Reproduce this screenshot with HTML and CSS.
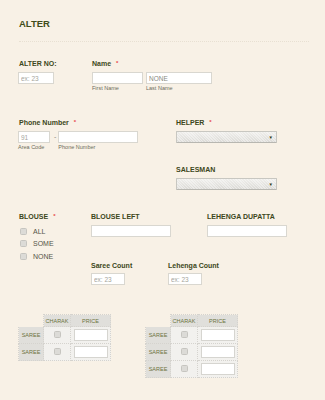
FILE: index.html
```html
<!DOCTYPE html>
<html lang="en">
<head>
  <meta charset="UTF-8">
  <meta name="viewport" content="width=device-width, initial-scale=1.0">
  <title>ALTER</title>
  <link rel="stylesheet" href="styles.css">
</head>
<body>
  <form class="form">
    <h1 class="title">ALTER</h1>
    <div class="divider"></div>

    <div class="row row-1">
      <div class="field w-alter">
        <label class="label">ALTER NO:</label>
        <input class="input in-short" type="text" placeholder="ex: 23">
      </div>
      <div class="field">
        <label class="label">Name <span class="req">*</span></label>
        <div class="pair">
          <div class="sub">
            <input class="input in-name" type="text">
            <span class="sublabel">First Name</span>
          </div>
          <div class="sub">
            <input class="input in-last" type="text" value="NONE">
            <span class="sublabel">Last Name</span>
          </div>
        </div>
      </div>
    </div>

    <div class="row row-2">
      <div class="field w-phone">
        <label class="label">Phone Number <span class="req">*</span></label>
        <div class="pair">
          <div class="sub">
            <input class="input in-area" type="text" placeholder="91">
            <span class="sublabel">Area Code</span>
          </div>
          <span class="dash">-</span>
          <div class="sub">
            <input class="input in-phone" type="text">
            <span class="sublabel">Phone Number</span>
          </div>
        </div>
      </div>
      <div class="field">
        <label class="label">HELPER <span class="req">*</span></label>
        <div class="select"><span class="arrow">&#9660;</span></div>
      </div>
    </div>

    <div class="row row-3">
      <div class="field">
        <label class="label">SALESMAN</label>
        <div class="select"><span class="arrow">&#9660;</span></div>
      </div>
    </div>

    <div class="row row-4">
      <div class="field w-blouse">
        <label class="label">BLOUSE <span class="req">*</span></label>
        <ul class="checks">
          <li><span class="box"></span>ALL</li>
          <li><span class="box"></span>SOME</li>
          <li><span class="box"></span>NONE</li>
        </ul>
      </div>
      <div class="field w-left">
        <label class="label">BLOUSE LEFT</label>
        <input class="input in-wide" type="text">
      </div>
      <div class="field">
        <label class="label">LEHENGA DUPATTA</label>
        <input class="input in-wide" type="text">
      </div>
    </div>

    <div class="row row-5">
      <div class="field w-count">
        <label class="label label-case">Saree Count</label>
        <input class="input in-count" type="text" placeholder="ex: 23">
      </div>
      <div class="field">
        <label class="label label-case">Lehenga Count</label>
        <input class="input in-count" type="text" placeholder="ex: 23">
      </div>
    </div>

    <div class="row row-6">
      <table class="grid grid-1">
        <tr>
          <th class="corner"></th>
          <th>CHARAK</th>
          <th>PRICE</th>
        </tr>
        <tr>
          <th class="rowhead">SAREE</th>
          <td class="c-check"><span class="box"></span></td>
          <td class="c-price"><span class="cell-input"></span></td>
        </tr>
        <tr>
          <th class="rowhead">SAREE</th>
          <td class="c-check"><span class="box"></span></td>
          <td class="c-price"><span class="cell-input"></span></td>
        </tr>
      </table>

      <table class="grid grid-2">
        <tr>
          <th class="corner"></th>
          <th>CHARAK</th>
          <th>PRICE</th>
        </tr>
        <tr>
          <th class="rowhead">SAREE</th>
          <td class="c-check"><span class="box"></span></td>
          <td class="c-price"><span class="cell-input"></span></td>
        </tr>
        <tr>
          <th class="rowhead">SAREE</th>
          <td class="c-check"><span class="box"></span></td>
          <td class="c-price"><span class="cell-input"></span></td>
        </tr>
        <tr>
          <th class="rowhead">SAREE</th>
          <td class="c-check"><span class="box"></span></td>
          <td class="c-price"><span class="cell-input"></span></td>
        </tr>
      </table>
    </div>
  </form>
</body>
</html>
```

FILE: styles.css
```css
html, body {
  margin: 0;
  padding: 0;
  background-color: #f8f1e6;
}
body {
  font-family: "Liberation Sans", Arial, sans-serif;
  color: #3f4a20;
}
.form {
  padding: 17px 17px 0 18px;
}
.title {
  margin: 0;
  font-size: 9.5px;
  line-height: 13px;
  font-weight: bold;
  color: #3f4d1a;
  padding-left: 1px;
}
.divider {
  margin-top: 11px;
  width: 290px;
  margin-left: 1px;
  border-top: 1px dotted #e8e0d2;
}
.row {
  display: flex;
  align-items: flex-start;
}
.row-1 { margin-top: 17px; }
.row-2 { margin-top: 26px; }
.row-3 { margin-top: 14px; padding-left: 158px; }
.row-4 { margin-top: 22px; }
.row-5 { margin-top: -1.5px; padding-left: 73px; }
.row-6 { margin-top: 29px; }

.field {
  display: flex;
  flex-direction: column;
}
.w-alter { width: 74px; }
.w-phone { width: 158px; }
.w-blouse { width: 73px; }
.w-left { width: 116px; }
.w-count { width: 77px; }

.label {
  display: block;
  font-size: 7px;
  line-height: 9px;
  font-weight: bold;
  color: #3c4720;
  margin-bottom: 4px;
  white-space: nowrap;
}
.w-alter .label,
.w-phone .label,
.w-blouse .label {
  padding-left: 1px;
}
.label-case {
  margin-bottom: 3px;
}
.req {
  color: #e8474a;
  margin-left: 3px;
  font-size: 6px;
  vertical-align: top;
}
.input {
  box-sizing: border-box;
  height: 12px;
  margin: 0;
  padding: 0 2px;
  border: 1px solid #d9d7d0;
  background-color: #fff;
  font-family: "Liberation Sans", Arial, sans-serif;
  font-size: 6.5px;
  color: #8a8a80;
  outline: none;
}
.input::placeholder {
  color: #a5a59c;
}
.in-short { width: 36px; }
.in-name { width: 51px; }
.in-last { width: 66px; }
.in-area { width: 32px; }
.in-phone { width: 80px; }
.in-wide { width: 80px; }
.in-count { width: 34px; }

.pair {
  display: flex;
  align-items: flex-start;
}
.sub {
  display: flex;
  flex-direction: column;
  margin-right: 3px;
}
.sublabel {
  font-size: 5.5px;
  line-height: 7px;
  color: #6d6d5c;
  margin-top: 1px;
  white-space: nowrap;
}
.dash {
  font-size: 7px;
  line-height: 12px;
  color: #8a8a80;
  margin: 0 2px 0 1px;
}

.select {
  box-sizing: border-box;
  width: 101px;
  height: 12px;
  border: 1px solid #c8c7c1;
  border-bottom-color: #b8b7b1;
  border-radius: 1px;
  background-color: #e6e5e2;
  background-image:
    repeating-linear-gradient(45deg, rgba(255, 255, 255, 0.4) 0 1px, transparent 1px 2px),
    linear-gradient(#efeeeb, #dcdbd7);
  display: flex;
  align-items: center;
  justify-content: flex-end;
  padding-right: 3px;
}
.arrow {
  font-size: 4.5px;
  color: #2f3a14;
}

.checks {
  list-style: none;
  margin: 0;
  padding: 0;
}
.checks li {
  display: flex;
  align-items: center;
  height: 12.5px;
  font-size: 7px;
  color: #555548;
}
.box {
  display: inline-block;
  box-sizing: border-box;
  width: 7px;
  height: 7px;
  border: 1px solid #c6c5c0;
  border-radius: 1.5px;
  background-color: #dcdbd7;
}
.checks .box {
  margin: 0 6px 0 2px;
}

.grid {
  border-collapse: collapse;
  font-size: 5.5px;
  color: #6c7340;
  table-layout: fixed;
}
.grid-2 {
  margin-left: 34px;
}
.grid th,
.grid td {
  padding: 0;
  border: 1px dotted #d5d3ce;
  text-align: center;
  font-weight: normal;
}
.grid tr:first-child th {
  height: 11px;
  background-color: #e0dfdb;
}
.grid .corner {
  width: 24px;
  background-color: transparent !important;
  border-color: transparent;
  border-right-color: #d5d3ce;
}
.grid .rowhead {
  height: 16px;
  background-color: #e0dfdb;
}
.grid td {
  background-color: #f2f1ee;
}
.c-check {
  width: 26px;
}
.c-price {
  width: 39px;
}
.cell-input {
  display: block;
  box-sizing: border-box;
  width: 34px;
  height: 12px;
  margin: 0 auto;
  border: 1px solid #d6d5d0;
  background-color: #fff;
}
```
